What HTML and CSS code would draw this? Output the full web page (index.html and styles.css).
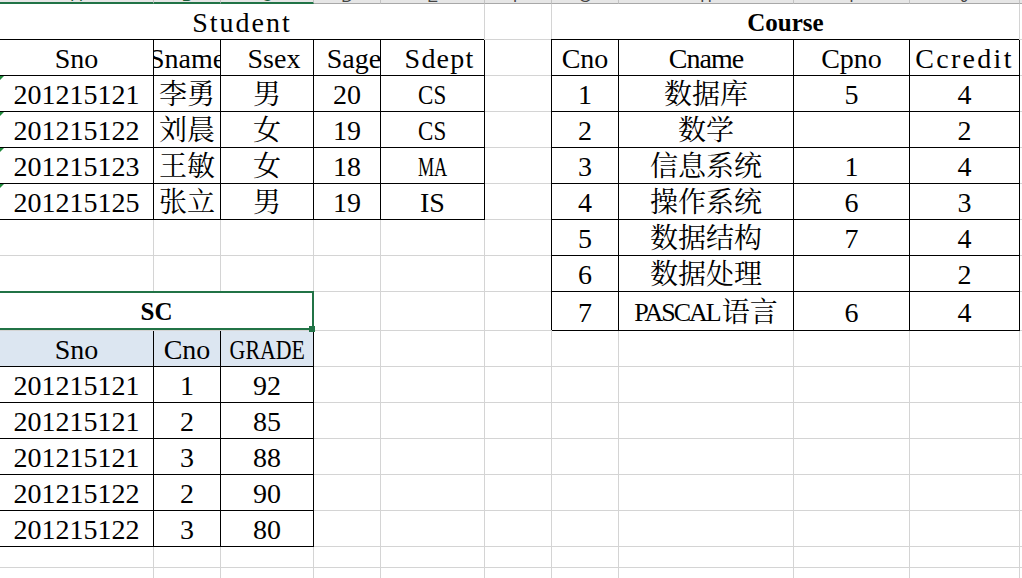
FILE: index.html
```html
<!DOCTYPE html>
<html lang="zh">
<head>
<meta charset="utf-8">
<title>Student / Course / SC</title>
<link rel="stylesheet" href="styles.css">
</head>
<body>
<div class="sheet">
  <div class="ch sel"><span>A</span></div>
  <div class="ch sel"><span>B</span></div>
  <div class="ch sel"><span>C</span></div>
  <div class="ch"><span>D</span></div>
  <div class="ch"><span>E</span></div>
  <div class="ch"><span>F</span></div>
  <div class="ch"><span>G</span></div>
  <div class="ch"><span>H</span></div>
  <div class="ch"><span>I</span></div>
  <div class="ch"><span>J</span></div>
  <div class="ch"></div>

  <div class="c span5"><span class="ls2">Student</span></div>
  <div class="c"></div>
  <div class="c span4 bold">Course</div>
  <div class="c"></div>

  <div class="c t">Sno</div>
  <div class="c t">Sname</div>
  <div class="c t lead">Ssex</div>
  <div class="c t lead">Sage</div>
  <div class="c t lead"><span class="ls1">Sdept</span></div>
  <div class="c"></div>
  <div class="c t">Cno</div>
  <div class="c t"><span class="lsn1">Cname</span></div>
  <div class="c t">Cpno</div>
  <div class="c t"><span class="ls23">Ccredit</span></div>
  <div class="c"></div>

  <div class="c t err">201215121</div>
  <div class="c t">李勇</div>
  <div class="c t">男</div>
  <div class="c t">20</div>
  <div class="c t"><span class="sx82">CS</span></div>
  <div class="c"></div>
  <div class="c t">1</div>
  <div class="c t">数据库</div>
  <div class="c t">5</div>
  <div class="c t">4</div>
  <div class="c"></div>

  <div class="c t err">201215122</div>
  <div class="c t">刘晨</div>
  <div class="c t">女</div>
  <div class="c t">19</div>
  <div class="c t"><span class="sx82">CS</span></div>
  <div class="c"></div>
  <div class="c t">2</div>
  <div class="c t">数学</div>
  <div class="c t"></div>
  <div class="c t">2</div>
  <div class="c"></div>

  <div class="c t err">201215123</div>
  <div class="c t">王敏</div>
  <div class="c t">女</div>
  <div class="c t">18</div>
  <div class="c t"><span class="sx65">MA</span></div>
  <div class="c"></div>
  <div class="c t">3</div>
  <div class="c t">信息系统</div>
  <div class="c t">1</div>
  <div class="c t">4</div>
  <div class="c"></div>

  <div class="c t err">201215125</div>
  <div class="c t">张立</div>
  <div class="c t">男</div>
  <div class="c t">19</div>
  <div class="c t">IS</div>
  <div class="c"></div>
  <div class="c t">4</div>
  <div class="c t">操作系统</div>
  <div class="c t">6</div>
  <div class="c t">3</div>
  <div class="c"></div>

  <div class="c"></div><div class="c"></div><div class="c"></div>
  <div class="c"></div><div class="c"></div><div class="c"></div>
  <div class="c t">5</div>
  <div class="c t">数据结构</div>
  <div class="c t">7</div>
  <div class="c t">4</div>
  <div class="c"></div>

  <div class="c"></div><div class="c"></div><div class="c"></div>
  <div class="c"></div><div class="c"></div><div class="c"></div>
  <div class="c t">6</div>
  <div class="c t">数据处理</div>
  <div class="c t"></div>
  <div class="c t">2</div>
  <div class="c"></div>

  <div class="c span3 bold selbox">SC</div>
  <div class="c"></div><div class="c"></div><div class="c"></div>
  <div class="c t">7</div>
  <div class="c t"><span class="pascal">PASCAL</span>语言</div>
  <div class="c t">6</div>
  <div class="c t">4</div>
  <div class="c"></div>

  <div class="c t hd">Sno</div>
  <div class="c t hd">Cno</div>
  <div class="c t hd"><span class="sx78">GRADE</span></div>
  <div class="c"></div><div class="c"></div><div class="c"></div><div class="c"></div>
  <div class="c"></div><div class="c"></div><div class="c"></div><div class="c"></div>

  <div class="c t">201215121</div>
  <div class="c t">1</div>
  <div class="c t">92</div>
  <div class="c"></div><div class="c"></div><div class="c"></div><div class="c"></div>
  <div class="c"></div><div class="c"></div><div class="c"></div><div class="c"></div>

  <div class="c t">201215121</div>
  <div class="c t">2</div>
  <div class="c t">85</div>
  <div class="c"></div><div class="c"></div><div class="c"></div><div class="c"></div>
  <div class="c"></div><div class="c"></div><div class="c"></div><div class="c"></div>

  <div class="c t">201215121</div>
  <div class="c t">3</div>
  <div class="c t">88</div>
  <div class="c"></div><div class="c"></div><div class="c"></div><div class="c"></div>
  <div class="c"></div><div class="c"></div><div class="c"></div><div class="c"></div>

  <div class="c t">201215122</div>
  <div class="c t">2</div>
  <div class="c t">90</div>
  <div class="c"></div><div class="c"></div><div class="c"></div><div class="c"></div>
  <div class="c"></div><div class="c"></div><div class="c"></div><div class="c"></div>

  <div class="c t">201215122</div>
  <div class="c t">3</div>
  <div class="c t">80</div>
  <div class="c"></div><div class="c"></div><div class="c"></div><div class="c"></div>
  <div class="c"></div><div class="c"></div><div class="c"></div><div class="c"></div>

  <div class="c"></div><div class="c"></div><div class="c"></div><div class="c"></div>
  <div class="c"></div><div class="c"></div><div class="c"></div><div class="c"></div>
  <div class="c"></div><div class="c"></div><div class="c"></div>

  <div class="c"></div><div class="c"></div><div class="c"></div><div class="c"></div>
  <div class="c"></div><div class="c"></div><div class="c"></div><div class="c"></div>
  <div class="c"></div><div class="c"></div><div class="c"></div>
</div>
</body>
</html>
```

FILE: styles.css
```css
* {
  box-sizing: border-box;
}

html,
body {
  margin: 0;
  height: 100%;
  overflow: hidden;
  background: #ffffff;
}

.sheet {
  display: grid;
  grid-template-columns: 154px 67px 93px 67px 104px 67px 67px 175px 116px 110px 40px;
  grid-template-rows: 4px repeat(8, 36px) 39px repeat(6, 36px) 21px 36px;
  width: 1062px;
  font-family: "Liberation Serif", "Noto Serif CJK SC", "Noto Sans CJK SC", serif;
  font-size: 28px;
  color: #000000;
}

/* column header strip (cut off at the top) */
.ch {
  background: #e6e6e6;
  border-right: 1px solid #c3c3c3;
  border-bottom: 1px solid #a8a8a8;
  display: flex;
  align-items: flex-end;
  justify-content: center;
  overflow: hidden;
  font: 16px/1 "Liberation Sans", sans-serif;
  color: #444444;
}

.ch span {
  margin-bottom: -0.15em;
}

.ch.sel {
  border-bottom: 2px solid #217346;
  color: #1e5e3a;
}

/* worksheet cells */
.c {
  border-right: 1px solid #d4d4d4;
  border-bottom: 1px solid #d4d4d4;
  display: flex;
  align-items: center;
  justify-content: center;
  overflow: hidden;
  white-space: nowrap;
  line-height: 1;
  padding-top: 3px;
}

.span3 { grid-column: span 3; }
.span4 { grid-column: span 4; }
.span5 { grid-column: span 5; }

.bold {
  font-weight: bold;
  font-size: 25px;
  padding-top: 1px;
}

/* bordered table cells */
.t {
  border-right-color: #000000;
  border-bottom-color: #000000;
  box-shadow: -1px -1px 0 #000000;
}

.hd {
  background: #dce6f1;
}

.lead {
  padding-left: 14px;
}

.ls1 { letter-spacing: 1.2px; }
.ls2 { letter-spacing: 2px; }
.ls23 { letter-spacing: 2.3px; }
.lsn1 { letter-spacing: -1px; }

.sx82,
.sx65,
.sx78 {
  display: inline-block;
}

.sx82 { transform: scaleX(0.82); }
.sx65 { transform: scaleX(0.65); }
.sx78 { transform: scaleX(0.78); }

.pascal {
  font-size: 26px;
  letter-spacing: -2px;
  margin-right: 2px;
}

/* "number stored as text" indicators */
.err {
  position: relative;
}

.err::before {
  content: "";
  position: absolute;
  left: 0;
  top: 0;
  border-top: 4px solid #1f8a3b;
  border-right: 4px solid transparent;
}

/* selected merged cell */
.selbox {
  position: relative;
  overflow: visible;
}

.selbox::after {
  content: "";
  position: absolute;
  top: -1px;
  left: -3px;
  right: -1px;
  bottom: 0;
  border: 2px solid #217346;
  z-index: 2;
}

.selbox::before {
  content: "";
  position: absolute;
  right: -2px;
  bottom: -2px;
  width: 6px;
  height: 6px;
  background: #217346;
  z-index: 3;
}
```
